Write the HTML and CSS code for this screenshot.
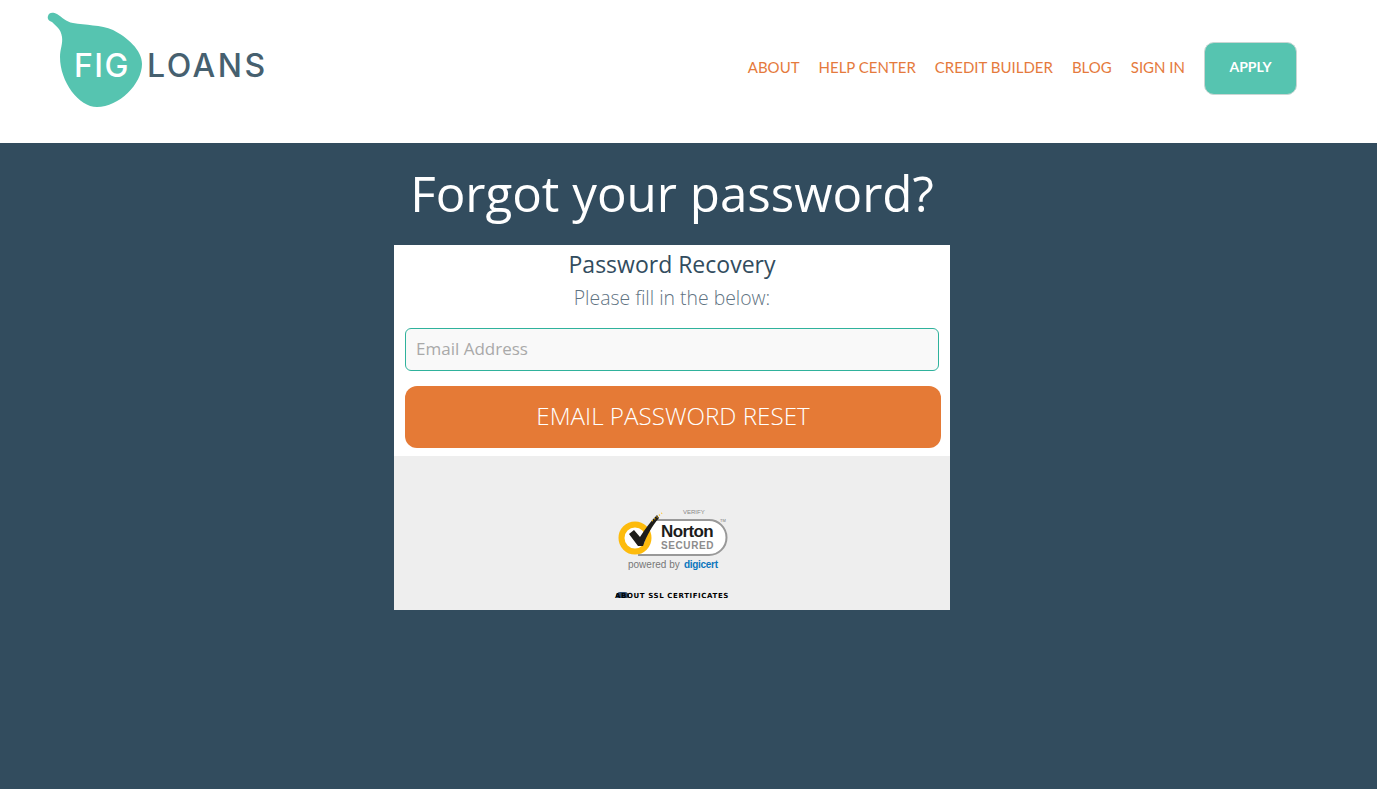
FILE: index.html
```html
<!DOCTYPE html>
<html lang="en">
<head>
    <meta charset="UTF-8">
    <meta name="viewport" content="width=device-width, initial-scale=1.0">
    <title>Fig Loans - Forgot your password?</title>
    <link rel="stylesheet" href="styles.css">
</head>
<body>
    <header class="site-header">
        <a href="#" class="logo" aria-label="Fig Loans">
            <svg width="222" height="100" viewBox="0 0 222 100">
                <path class="logo-leaf" d="M1 4 C2 0 6 0 10 2 C15 5 19 10 26 11 C38 13 54 13 66 18 C80 25 95 38 95 52 C95 72 72 95 50 95 C32 95 13 70 13 45 C13 37 16 32 15 25 C14 17 9 14 5 10 C2 9 0 7 1 4 Z"/>
                <text class="logo-fig" x="27" y="65">FIG</text>
                <text class="logo-loans" x="100" y="65">LOANS</text>
            </svg>
        </a>
        <nav class="main-nav">
            <a href="#">ABOUT</a>
            <a href="#">HELP CENTER</a>
            <a href="#">CREDIT BUILDER</a>
            <a href="#">BLOG</a>
            <a href="#">SIGN IN</a>
            <a href="#" class="apply-btn">APPLY</a>
        </nav>
    </header>

    <main class="page">
        <h1>Forgot your password?</h1>
        <section class="card">
            <form class="recovery-form">
                <h2>Password Recovery</h2>
                <p>Please fill in the below:</p>
                <input type="text" placeholder="Email Address">
                <button type="button">EMAIL PASSWORD RESET</button>
            </form>
            <div class="seal-box">
                <div class="seal">
                    <svg width="112" height="66" viewBox="0 0 112 66">
                        <text class="seal-verify" x="67" y="8">VERIFY</text>
                        <path class="seal-pill" d="M38 14 H93 A17.500 17.500 0 0 1 93 49 H22"/>
                        <circle class="seal-ring" cx="19" cy="32" r="13.500"/>
                        <path class="seal-check" d="M13 28 L18 24 L24 31 C29 23 34 16 41 9 L43 12 C36 20 31 29 27 40 L22 40 Z"/>
                        <path class="seal-spark" d="M36 15 L46 7"/>
                        <text class="seal-norton" x="45" y="31">Norton</text>
                        <text class="seal-secured" x="45" y="43">SECURED</text>
                        <text class="seal-tm" x="104" y="16">TM</text>
                        <text class="seal-powered" x="12" y="62">powered by</text>
                        <text class="seal-digicert" x="68" y="62">digicert</text>
                    </svg>
                </div>
                <a href="#" class="ssl-link"><span class="ssl-eye"></span>ABOUT SSL CERTIFICATES</a>
            </div>
        </section>
    </main>
</body>
</html>
```

FILE: styles.css
```css
html, body {
    height: 100%;
}

body {
    margin: 0;
    font-family: "Open Sans", Lato, sans-serif;
    background-color: #324c5e;
    display: flex;
    flex-direction: column;
}

/* Header */
.site-header {
    background-color: #fff;
    height: 143px;
    padding: 12px 80px 0 47px;
    box-sizing: border-box;
    display: flex;
    justify-content: space-between;
    align-items: flex-start;
}

.logo svg {
    display: block;
}

.logo-leaf {
    fill: #56c4b0;
}

.logo-fig, .logo-loans {
    font-family: Inter, sans-serif;
    font-size: 32px;
    font-weight: 500;
}

.logo-fig {
    fill: #fff;
    letter-spacing: 1.5px;
}

.logo-loans {
    fill: #46606f;
    letter-spacing: 2.5px;
}

.main-nav {
    display: flex;
    align-items: center;
    gap: 19px;
    margin-top: 30px;
}

.main-nav a {
    color: #e57a3c;
    font-family: Lato, sans-serif;
    font-size: 15px;
    line-height: 40px;
    margin-bottom: 4px;
    text-decoration: none;
}

.main-nav .apply-btn {
    background-color: #56c4b0;
    border: 1px solid #c9d6d3;
    border-radius: 10px;
    box-sizing: border-box;
    width: 93px;
    height: 53px;
    margin-bottom: 0;
    line-height: 48px;
    text-align: center;
    color: #fff;
    font-size: 14px;
    font-weight: 700;
}

/* Main */
.page {
    flex: 1;
    display: flex;
    flex-direction: column;
    align-items: center;
    padding-right: 33px;
}

h1 {
    margin: 17px 0 19px;
    color: #fff;
    font-size: 49.300px;
    line-height: 66px;
    font-weight: 400;
    text-align: center;
}

.card {
    width: 556px;
}

.recovery-form {
    background-color: #fff;
    padding: 0 11px 8px;
    height: 211px;
    box-sizing: border-box;
    text-align: center;
}

.recovery-form h2 {
    margin: 0;
    padding-top: 4px;
    color: #324c5e;
    font-size: 23px;
    line-height: 30px;
    font-weight: 400;
}

.recovery-form p {
    margin: 5px 0 16px;
    color: #5f7382;
    font-size: 19.400px;
    font-weight: 300;
    line-height: 28px;
}

.recovery-form input {
    display: block;
    width: 534px;
    height: 43px;
    box-sizing: border-box;
    padding: 0 10px 2px;
    border: 1px solid #2fb29c;
    border-radius: 6px;
    background-color: #f9f9f9;
    font-family: inherit;
    font-size: 17px;
}

.recovery-form input::placeholder {
    color: #a9a9a9;
}

.recovery-form button {
    display: block;
    width: 536px;
    height: 62px;
    margin-top: 15px;
    padding-bottom: 4px;
    border: 0;
    border-radius: 12px;
    background-color: #e57a36;
    color: #fff;
    font-family: inherit;
    font-size: 24.200px;
    font-weight: 300;
}

/* Seal */
.seal-box {
    background-color: #eee;
    height: 154px;
    padding-top: 50px;
    box-sizing: border-box;
    display: flex;
    flex-direction: column;
    align-items: center;
}

.seal svg {
    display: block;
}

.seal-verify {
    font-family: "Liberation Sans", sans-serif;
    font-size: 6px;
    fill: #888;
}

.seal-pill {
    fill: #fff;
    stroke: #999;
    stroke-width: 2;
}

.seal-ring {
    fill: #fff;
    stroke: #fdbb0c;
    stroke-width: 6;
}

.seal-check {
    fill: #1d1d1b;
}

.seal-spark {
    stroke: #fdbb0c;
    stroke-width: 1.500;
    stroke-dasharray: 1 2;
}

.seal-norton {
    font-family: "Liberation Sans", sans-serif;
    font-weight: 700;
    font-size: 17px;
    letter-spacing: -0.6px;
    fill: #1d1d1b;
}

.seal-secured {
    font-family: "Liberation Sans", sans-serif;
    font-weight: 700;
    font-size: 10px;
    letter-spacing: 0.6px;
    fill: #8c8c8c;
}

.seal-tm {
    font-family: "Liberation Sans", sans-serif;
    font-size: 4px;
    fill: #777;
}

.seal-powered {
    font-family: "Liberation Sans", sans-serif;
    font-size: 10px;
    fill: #777;
}

.seal-digicert {
    font-family: "Liberation Sans", sans-serif;
    font-weight: 700;
    font-size: 10px;
    letter-spacing: -0.3px;
    fill: #0b76bd;
}

.ssl-link {
    position: relative;
    isolation: isolate;
    margin-top: 20px;
    color: #000;
    font-family: "DejaVu Sans", sans-serif;
    font-size: 7px;
    font-weight: 700;
    letter-spacing: 0.6px;
    text-decoration: none;
}

.ssl-eye {
    position: absolute;
    z-index: -1;
    left: 1px;
    top: 0;
    width: 13px;
    height: 6px;
    border-radius: 7px 7px 3px 3px;
    background-color: #2a4a6e;
}
```
